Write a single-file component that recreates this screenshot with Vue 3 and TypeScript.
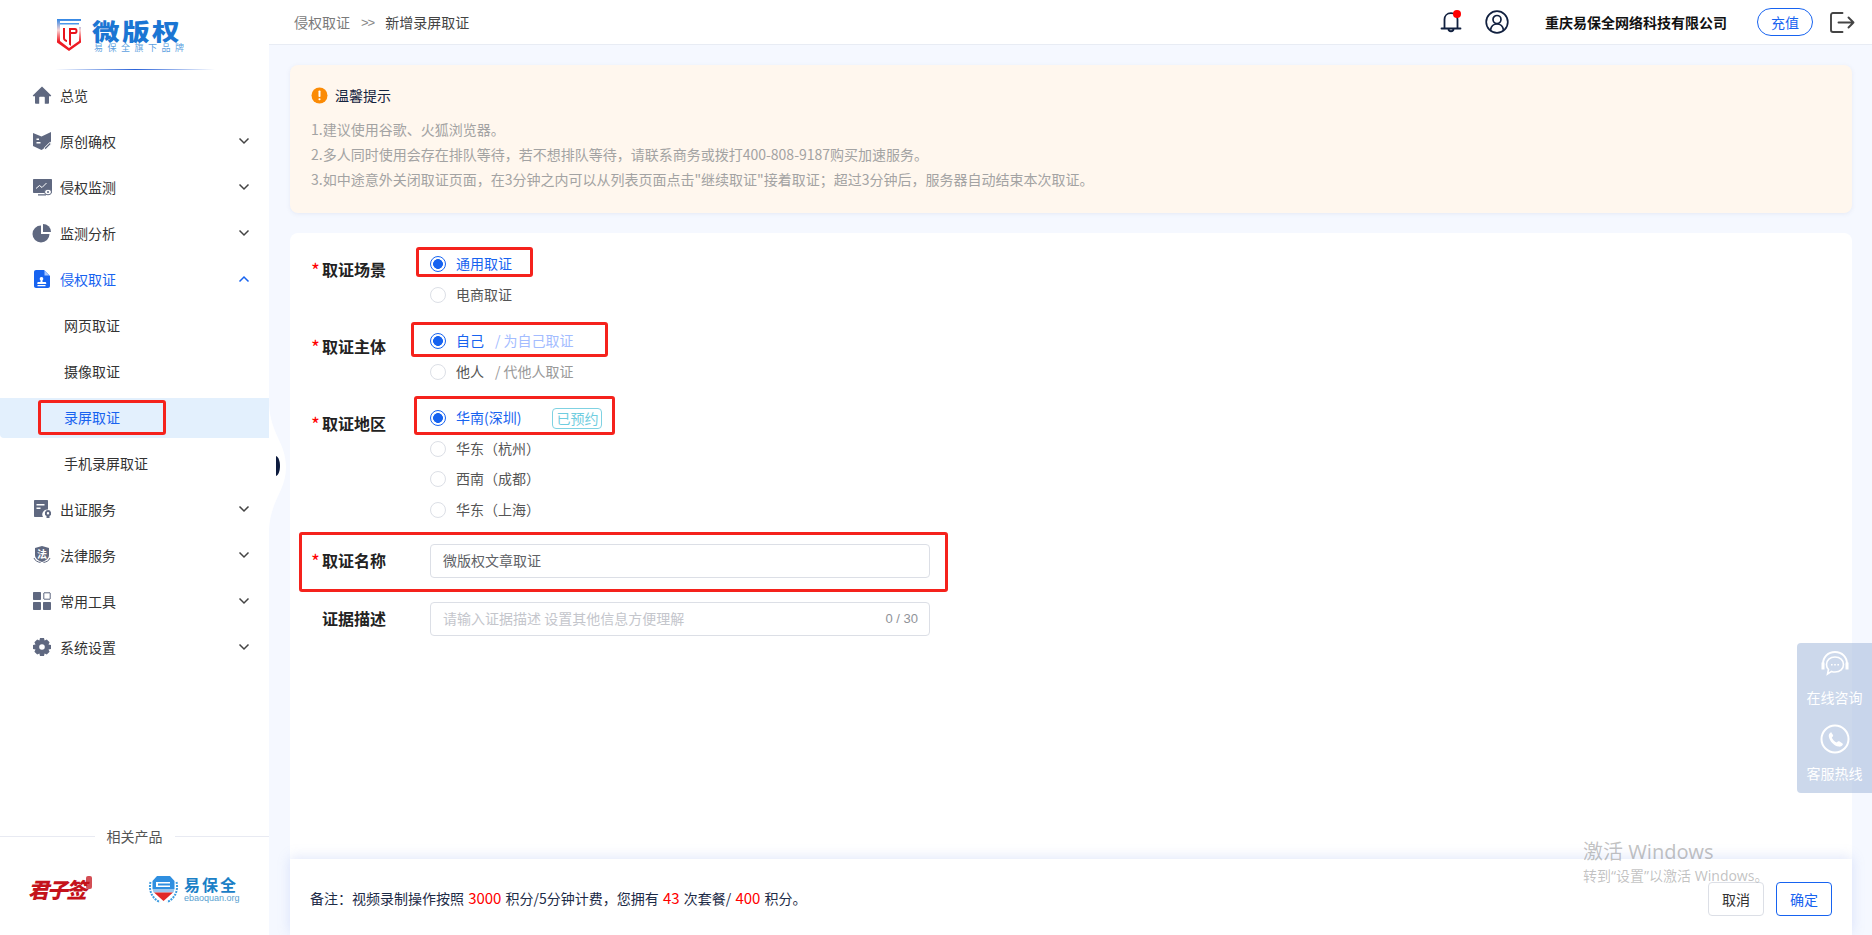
<script setup lang="ts">
interface Shape { d: string; f?: string; s?: string }
interface Item { label: string; paths: Shape[]; open?: boolean; chevron?: boolean; active?: boolean; glyph?: string }

const gray = '#5f6880'
const menuTop: Item[] = [
  { label: '总览', chevron: false, paths: [{ d: 'M9 .6 0 9.2c-.4.5 0 1.1.5 1.1H2v6.4c0 .6.5 1 1 1h3.2v-6c0-.6.4-1 1-1h3.6c.6 0 1 .4 1 1v6H15c.6 0 1-.4 1-1v-6.400h1.500c.5 0 .9-.6.5-1.100z', f: gray }] },
  { label: '原创确权', chevron: true, paths: [
    { d: 'M0 1 8.500 4.500 18 0V9.500L11 16.500 8.500 18 0 14z', f: gray },
    { d: 'M3.500 6.500h2.500V8H3.500zM3.500 10h4v1.400h-4z', f: '#fff' },
    { d: 'M11.500 15.800 16.800 10.500 18.300 12 13 17.300 11.200 17.600z', f: gray, s: '#fff' }] },
  { label: '侵权监测', chevron: true, paths: [
    { d: 'M1 1h17c.6 0 1 .4 1 1v12c0 .6-.4 1-1 1H1c-.6 0-1-.4-1-1V2c0-.6.4-1 1-1zM5 16.300h8v1.200H5z', f: gray },
    { d: 'M3 10.500 6.500 7.500 9 9.500 13.500 5', f: 'none', s: '#fff' },
    { d: 'M18.500 14a3.500 2.800 0 1 1-7 0 3.500 2.800 0 0 1 7 0z', f: '#fff', s: gray },
    { d: 'M15 13a1 1 0 1 0 0 2 1 1 0 0 0 0-2z', f: gray }] },
  { label: '监测分析', chevron: true, paths: [
    { d: 'M8 1.500V10h8.500A8.500 8.500 0 1 1 8 1.500z', f: gray },
    { d: 'M10 0a8 8 0 0 1 8 8h-8z', f: gray }] },
]
const evidence: Item = { label: '侵权取证', chevron: true, open: true, active: true, paths: [
  { d: 'M3 0h8l6 6v10c0 1.100-.9 2-2 2H3c-1.100 0-2-.9-2-2V2C1 .9 1.900 0 3 0z', f: '#1763f0' },
  { d: 'M11.500 .8 16.200 5.500H11.500z', f: '#a9c8ff' },
  { d: 'M8.500 7a1.800 1.800 0 0 1 1 3.300V12h2.800c.5 0 .9.400.9.900V14H4.300v-1.100c0-.5.400-.9.900-.9H7.500v-1.700A1.800 1.800 0 0 1 8.500 7zM4.500 15h8v1.200h-8z', f: '#fff' }] }
const subMenu = [
  { label: '网页取证' },
  { label: '摄像取证' },
  { label: '录屏取证', active: true },
  { label: '手机录屏取证' },
]
const menuBottom: Item[] = [
  { label: '出证服务', chevron: true, paths: [
    { d: 'M2 0h12c.6 0 1 .4 1 1v8.500a5 5 0 0 0-5 7.500H2c-.6 0-1-.4-1-1V1c0-.6.4-1 1-1z', f: gray },
    { d: 'M3.500 4h8v1.500h-8zM3.500 7.500h4V9h-4z', f: '#fff' },
    { d: 'M15 10a3.200 3.200 0 0 1 1.500 6v2h-3v-2A3.200 3.200 0 0 1 15 10z', f: gray },
    { d: 'M15 12a1.200 1.200 0 1 0 0 2.400 1.200 1.200 0 0 0 0-2.400z', f: '#fff' }] },
  { label: '法律服务', chevron: true, glyph: '法', paths: [
    { d: 'M9 0 16 2v7c0 3.500-3 5.500-7 7-4-1.500-7-3.500-7-7V2z', f: gray },
    { d: 'M1 12c1 3 4 4 6.500 4.500M17 12c-1 3-4 4-6.500 4.500', f: 'none', s: gray }] },
  { label: '常用工具', chevron: true, paths: [
    { d: 'M1 0h6c.6 0 1 .4 1 1v6c0 .6-.4 1-1 1H1c-.6 0-1-.4-1-1V1c0-.6.400-1 1-1zM1 10h6c.6 0 1 .4 1 1v6c0 .6-.4 1-1 1H1c-.6 0-1-.4-1-1v-6c0-.6.400-1 1-1zM11 10h6c.6 0 1 .4 1 1v6c0 .6-.4 1-1 1h-6c-.6 0-1-.4-1-1v-6c0-.6.400-1 1-1z', f: gray },
    { d: 'M11 .8h6c.1 0 .2.100.2.200v6c0 .1-.1.200-.2.200h-6c-.1 0-.2-.1-.2-.2V1c0-.1.100-.2.200-.2z', f: '#fff', s: gray }] },
  { label: '系统设置', chevron: true, paths: [
    { d: 'M7 0h4l.6 2.500 2.200-1.100 2.800 2.800-1.100 2.200L18 7v4l-2.500.6 1.100 2.200-2.800 2.800-2.200-1.100L11 18H7l-.6-2.500-2.200 1.100-2.800-2.800 1.100-2.200L0 11V7l2.500-.6-1.100-2.200 2.800-2.800 2.200 1.100z', f: gray },
    { d: 'M9 6.200a2.800 2.800 0 1 0 0 5.600 2.800 2.800 0 0 0 0-5.600z', f: '#fff' }] },
]

const tips = [
  '1.建议使用谷歌、火狐浏览器。',
  '2.多人同时使用会存在排队等待，若不想排队等待，请联系商务或拨打400-808-9187购买加速服务。',
  '3.如中途意外关闭取证页面，在3分钟之内可以从列表页面点击"继续取证"接着取证；超过3分钟后，服务器自动结束本次取证。',
]
const regions = ['华东（杭州）', '西南（成都）', '华东（上海）']
</script>

<template>
  <div class="page">
    <aside class="side">
      <div class="logo">
        <svg class="shield" width="26" height="34" viewBox="0 0 26 34">
          <defs>
            <linearGradient id="sg" x1="0" y1="0" x2="0" y2="1">
              <stop offset="0" stop-color="#2f86e6" /><stop offset=".35" stop-color="#fbd4d4" /><stop offset=".7" stop-color="#ee1c25" />
            </linearGradient>
          </defs>
          <path d="M1 1h24v2H4v20l9 7 10-7V9h2v15.500L13 33 1 24.500z" fill="url(#sg)" />
          <path d="M4 5h19v1.500H4z" fill="#4a97ea" />
          <path d="M7 10h2v10c0 1 .8 1.600 2 2v2c-2.500-.6-4-2-4-4zM13 10h6c1.700 0 2.500 1.200 2.500 3s-.8 3-2.500 3h-4v12l-2-1.400zM15 12v2h4c.3 0 .5-.4.500-1s-.2-1-.5-1z" fill="#e8131c" />
        </svg>
        <div class="logo-words">
          <div class="logo-name">微版权</div>
          <div class="logo-sub">易保全旗下品牌</div>
        </div>
      </div>
      <div class="logo-line"></div>

      <nav class="menu">
        <a v-for="m in menuTop" :key="m.label" class="item">
          <svg class="ico" width="20" height="20" viewBox="-1 -1 20 20"><path v-for="(p, i) in m.paths" :key="i" :d="p.d" :fill="p.f" :stroke="p.s" /></svg>
          <span class="label">{{ m.label }}</span>
          <svg v-if="m.chevron" class="chev" width="12" height="8" viewBox="0 0 12 8"><path d="M1.500 1.500 6 6l4.500-4.500" fill="none" stroke="#444" stroke-width="1.500" /></svg>
        </a>
        <a class="item on">
          <svg class="ico" width="20" height="20" viewBox="-1 -1 20 20"><path v-for="(p, i) in evidence.paths" :key="i" :d="p.d" :fill="p.f" /></svg>
          <span class="label">{{ evidence.label }}</span>
          <svg class="chev" width="12" height="8" viewBox="0 0 12 8"><path d="M1.500 6.500 6 2l4.500 4.500" fill="none" stroke="#1763f0" stroke-width="1.500" /></svg>
        </a>
        <a v-for="s in subMenu" :key="s.label" class="item sub" :class="{ cur: s.active }">
          <span class="sublabel">{{ s.label }}<i v-if="s.active" class="mark mark-side"></i></span>
        </a>
        <a v-for="m in menuBottom" :key="m.label" class="item">
          <svg class="ico" width="20" height="20" viewBox="-1 -1 20 20">
            <path v-for="(p, i) in m.paths" :key="i" :d="p.d" :fill="p.f" :stroke="p.s" />
            <text v-if="m.glyph" x="9" y="11.500" class="ico-glyph" text-anchor="middle">{{ m.glyph }}</text>
          </svg>
          <span class="label">{{ m.label }}</span>
          <svg class="chev" width="12" height="8" viewBox="0 0 12 8"><path d="M1.500 1.500 6 6l4.500-4.500" fill="none" stroke="#444" stroke-width="1.500" /></svg>
        </a>
      </nav>

      <div class="related">
        <div class="rel-title"><span>相关产品</span></div>
        <div class="rel-logos">
          <div class="junzi">君子签<i class="seal"></i></div>
          <div class="ebq">
            <svg width="31" height="31" viewBox="0 0 31 31">
              <path d="M2.500 9C.5 17 4 26 12 29M28.500 9c2 8-1.500 17-9.500 20" fill="none" stroke="#3c9be0" stroke-width="2" stroke-dasharray="2 1" />
              <path d="M9 3h13l4.500 5v8H4.500V8z" fill="#2f8fe0" />
              <path d="M4.500 16h22l-1 3.500H5.500z" fill="#9bc7ee" />
              <path d="M6 19.500h19L15.500 28z" fill="#e22a27" />
              <path d="M8 9h14v1.500H10v2h12V14H8z" fill="#fff" />
            </svg>
            <div class="ebq-words">
              <div class="ebq-name">易保全</div>
              <div class="ebq-url">ebaoquan.org</div>
            </div>
          </div>
        </div>
      </div>
    </aside>

    <svg class="notch" width="18" height="124" viewBox="0 0 18 124">
      <path d="M0 0c2 30 17 38 17 62S2 94 0 124z" fill="#fff" />
      <path d="M7 51c2.500 1 4 5 4 10s-1.500 9-4 10z" fill="#0d1b3e" />
    </svg>

    <div class="main">
      <header class="top">
        <div class="crumbs">
          <span class="crumb-a">侵权取证</span>
          <span class="crumb-sep">&gt;&gt;</span>
          <span class="crumb-b">新增录屏取证</span>
        </div>
        <div class="top-right">
          <span class="bell">
            <svg width="22" height="24" viewBox="0 0 22 24">
              <path d="M4.500 18V9.500C4.500 6 7 3.200 11 3.200s6.500 2.800 6.500 6.300V18M1.500 18.500h19M8.500 19c0 3 5 3 5 0" fill="none" stroke="#11203f" stroke-width="1.800" stroke-linecap="round" />
            </svg>
            <i class="dot"></i>
          </span>
          <svg class="user" width="24" height="24" viewBox="0 0 24 24">
            <circle cx="12" cy="12" r="10.800" fill="none" stroke="#11203f" stroke-width="1.700" />
            <circle cx="12" cy="9.500" r="4" fill="none" stroke="#11203f" stroke-width="1.700" />
            <path d="M5.500 20c.6-3.800 3-6 6.500-6s5.900 2.200 6.500 6" fill="none" stroke="#11203f" stroke-width="1.700" />
          </svg>
          <span class="company">重庆易保全网络科技有限公司</span>
          <button class="charge">充值</button>
          <svg class="logout" width="25" height="21" viewBox="0 0 25 21">
            <path d="M12.500 1H3C1.800 1 1 1.800 1 3v15c0 1.200.8 2 2 2h9.500" fill="none" stroke="#444" stroke-width="1.900" stroke-linecap="round" />
            <path d="M8.500 10.500h15M18.500 5.500l5 5-5 5" fill="none" stroke="#444" stroke-width="1.900" stroke-linecap="round" stroke-linejoin="round" />
          </svg>
        </div>
      </header>

      <div class="content">
        <section class="notice">
          <div class="notice-title">
            <svg width="17" height="17" viewBox="0 0 17 17"><circle cx="8.500" cy="8.500" r="8" fill="#fb8b05" /><rect x="7.500" y="3.500" width="2" height="6.500" rx=".8" fill="#fff" /><rect x="7.500" y="11.300" width="2" height="2" rx=".8" fill="#fff" /></svg>
            <span>温馨提示</span>
          </div>
          <p v-for="t in tips" :key="t">{{ t }}</p>
        </section>

        <section class="card">
          <form class="form" @submit.prevent>
            <div class="group">
              <label class="name req">取证场景</label>
              <div class="opts">
                <div class="opt sel"><i class="radio"></i><span>通用取证</span><i class="mark m1"></i></div>
                <div class="opt"><i class="radio"></i><span>电商取证</span></div>
              </div>
            </div>
            <div class="group">
              <label class="name req">取证主体</label>
              <div class="opts">
                <div class="opt sel"><i class="radio"></i><span>自己</span><em class="hint">/ 为自己取证</em><i class="mark m2"></i></div>
                <div class="opt"><i class="radio"></i><span>他人</span><em class="hint">/ 代他人取证</em></div>
              </div>
            </div>
            <div class="group">
              <label class="name req">取证地区</label>
              <div class="opts">
                <div class="opt sel"><i class="radio"></i><span>华南(深圳)</span><b class="tag">已预约</b><i class="mark m3"></i></div>
                <div v-for="r in regions" :key="r" class="opt"><i class="radio"></i><span>{{ r }}</span></div>
              </div>
            </div>
            <div class="field f-name">
              <label class="name req">取证名称</label>
              <div class="input">微版权文章取证</div>
              <i class="mark m4"></i>
            </div>
            <div class="field f-desc">
              <label class="name">证据描述</label>
              <div class="input ph">请输入证据描述 设置其他信息方便理解<span class="count">0 / 30</span></div>
            </div>
          </form>
          <footer class="foot">
            <p class="note">备注：视频录制操作按照 <b>3000</b> 积分/5分钟计费，您拥有 <b>43</b> 次套餐/ <b>400</b> 积分。</p>
            <div class="btns">
              <button class="btn">取消</button>
              <button class="btn ok">确定</button>
            </div>
          </footer>
        </section>
      </div>
    </div>

    <div class="float">
      <div class="float-item">
        <svg width="30" height="28" viewBox="0 0 30 28">
          <path d="M3 14C3 7 8 2 15 2s12 5 12 12" fill="none" stroke="#fff" stroke-width="2" />
          <path d="M1.500 12.500h3v7h-3zM25.500 12.500h3v7h-3z" fill="#fff" />
          <path d="M15 7c5 0 8.500 3 8.500 7.500S20 22 15 22c-1.200 0-2.400-.2-3.400-.6L7.500 24l1-4.500C7 18 6.500 16.300 6.500 14.500 6.500 10 10 7 15 7z" fill="none" stroke="#fff" stroke-width="1.600" />
          <path d="M11 14h1.600v1.600H11zM14.200 14h1.600v1.600h-1.600zM17.400 14H19v1.600h-1.600z" fill="#fff" />
        </svg>
        <span>在线咨询</span>
      </div>
      <div class="float-item">
        <svg width="30" height="30" viewBox="0 0 30 30">
          <circle cx="15" cy="15" r="13.500" fill="none" stroke="#fff" stroke-width="2" />
          <path d="M10.500 7.500 13 11c.3.500.2 1-.2 1.400l-1 1c.7 2 2.700 4.200 5 5.100l1-1c.4-.4 1-.5 1.500-.2l3.200 2.300c.5.400.5 1 .1 1.500-1 1.100-2.300 1.800-3.800 1.500-5-1-9-5.200-10-10.200-.2-1.500.4-2.800 1.500-3.700.4-.4 1.300-.2 1.700.3z" fill="#fff" />
        </svg>
        <span>客服热线</span>
      </div>
    </div>

    <div class="watermark">
      <div class="wm1">激活 Windows</div>
      <div class="wm2">转到“设置”以激活 Windows。</div>
    </div>
  </div>
</template>

<style scoped>
* { box-sizing: border-box; }
.page {
  position: relative;
  display: flex;
  width: 1872px;
  height: 935px;
  overflow: hidden;
  background: #f5f8ff;
  font-family: "Noto Sans CJK SC", "Noto Sans", sans-serif;
  font-size: 14px;
  color: #333;
}
.side {
  flex: 0 0 269px;
  display: flex;
  flex-direction: column;
  background: #fff;
}
.logo { display: flex; align-items: flex-start; height: 69px; padding: 18px 0 0 56px; gap: 10px; }
.logo-words { display: flex; flex-direction: column; }
.logo-name {
  font-size: 23px;
  line-height: 24px;
  font-weight: 900;
  letter-spacing: 2px;
  color: #1b76d3;
  transform: scaleX(1.2);
  transform-origin: left center;
}
.logo-sub { font-size: 9px; line-height: 10px; margin-top: 1px; padding-left: 2px; letter-spacing: 4.500px; color: #5d9fe0; white-space: nowrap; }
.logo-line {
  width: 160px;
  height: 1px;
  margin-left: 55px;
  background: linear-gradient(90deg, transparent, #2a62d8 50%, transparent);
}
.menu { display: flex; flex-direction: column; padding-top: 2px; }
.item {
  position: relative;
  display: flex;
  align-items: center;
  height: 46px;
  padding-left: 32px;
  color: #333;
}
.ico { flex: none; }
.ico-glyph { font-size: 10px; font-weight: 700; fill: #fff; }
.label { margin-left: 8px; }
.chev { position: absolute; left: 238px; top: 19px; }
.item.on .label { color: #1763f0; }
.sub { padding-left: 64px; }
.sublabel { position: relative; }
.sub.cur { height: 46px; color: #1763f0; }
.sub.cur::before {
  content: "";
  position: absolute;
  left: 0;
  right: 0;
  top: 4px;
  height: 40px;
  background: #e3f0fd;
  border-radius: 0 0 0 4px;
}
.mark {
  position: absolute;
  border: 3px solid #f5221c;
  border-radius: 3px;
  pointer-events: none;
  z-index: 2;
}
.mark-side { left: -26px; top: -7px; width: 128px; height: 35px; }
.related { margin-top: auto; height: 109px; }
.rel-title {
  display: flex;
  justify-content: center;
  height: 20px;
  margin-bottom: 27px;
  background: linear-gradient(#e8eaf2, #e8eaf2) center / 100% 1px no-repeat;
}
.rel-title span { padding: 0 12px; background: #fff; color: #555; line-height: 20px; }
.rel-logos { display: flex; align-items: center; padding-left: 28px; }
.junzi {
  position: relative;
  width: 120px;
  font-size: 21px;
  font-weight: 900;
  font-style: italic;
  color: #c4131b;
  letter-spacing: -2px;
  line-height: 30px;
}
.seal { position: absolute; left: 58px; top: 2px; width: 6px; height: 13px; border-radius: 2px; background: #c4131b; opacity: .75; }
.ebq { display: flex; align-items: center; gap: 5px; }
.ebq-name { font-size: 16px; line-height: 18px; font-weight: 700; letter-spacing: 2px; color: #1b80c6; }
.ebq-url { font-family: "Liberation Sans", sans-serif; font-size: 9px; line-height: 10px; color: #5a9fd0; }
.notch { position: absolute; left: 269px; top: 405px; z-index: 3; }
.main { flex: 1; min-width: 0; display: flex; flex-direction: column; }
.top {
  flex: 0 0 45px;
  display: flex;
  align-items: center;
  justify-content: space-between;
  padding: 0 17px 0 25px;
  background: #fff;
  border-bottom: 1px solid #e8ecf4;
}
.crumbs { display: flex; align-items: center; }
.crumb-a { color: #7a7a7a; }
.crumb-sep { margin: 0 11px; color: #888; font-family: "Liberation Sans", sans-serif; font-size: 13px; letter-spacing: -1px; }
.crumb-b { color: #444; }
.top-right { display: flex; align-items: center; }
.bell { position: relative; display: flex; margin-right: 23px; }
.dot { position: absolute; right: 1px; top: 0; width: 8px; height: 8px; border-radius: 50%; background: #f00; }
.user { margin-right: 36px; }
.company { font-size: 14px; font-weight: 700; color: #111; margin-right: 30px; }
.charge {
  width: 56px;
  height: 28px;
  padding: 0;
  margin-right: 17px;
  border: 1px solid #1763f0;
  border-radius: 14px;
  background: #fff;
  color: #1763f0;
  font: inherit;
}
.content { flex: 1; min-height: 0; display: flex; flex-direction: column; padding: 20px 20px 0 21px; gap: 20px; }
.notice {
  flex: 0 0 148px;
  padding: 20px 21px 0;
  background: #fff7ee;
  border-radius: 8px;
  box-shadow: 0 1px 4px rgba(120, 130, 170, .12);
}
.notice-title { display: flex; align-items: center; gap: 7px; height: 20px; margin: 0 0 12px; color: #14233f; }
.notice p { margin: 0; line-height: 25px; color: #a3a3a3; font-size: 14px; }
.card {
  flex: 1;
  min-height: 0;
  display: flex;
  flex-direction: column;
  background: #fff;
  border-radius: 8px 8px 0 0;
}
.form { flex: 1; padding: 16px 0 0 20px; }
.group { display: flex; margin-bottom: 16px; }
.group:nth-child(3) { margin-bottom: 19px; }
.name {
  position: relative;
  flex: 0 0 120px;
  padding: 10px 0 0 12px;
  font-size: 16px;
  line-height: 20px;
  font-weight: 700;
  color: #222;
}
.req::before { content: "*"; position: absolute; left: 1px; top: 11px; color: #f00; font-weight: 400; font-size: 19px; }
.opts { display: flex; flex-direction: column; }
.opt { position: relative; display: flex; align-items: center; height: 30.500px; color: #555; }
.opt span, .hint { margin-bottom: 2px; }
.radio {
  flex: none;
  width: 16px;
  height: 16px;
  margin-right: 10px;
  border: 1px solid #dcdfe6;
  border-radius: 50%;
  background: #fff;
}
.opt.sel { color: #1763f0; }
.opt.sel .radio { border-color: #1763f0; background: radial-gradient(circle, #1763f0 4.600px, #fff 5.200px); }
.hint { margin-left: 11px; font-style: normal; color: #999; }
.sel .hint { color: #a3bcff; }
.tag {
  margin-left: 31px;
  width: 50px;
  height: 21px;
  border: 1px solid #7fd2e2;
  border-radius: 4px;
  color: #6fcde0;
  font-weight: 400;
  line-height: 18px;
  text-align: center;
}
.m1 { left: -14px; top: -2px; width: 117px; height: 30px; }
.m2 { left: -19px; top: -4px; width: 197px; height: 35px; }
.m3 { left: -16px; top: -7px; width: 201px; height: 39px; }
.field { position: relative; display: flex; align-items: center; height: 34px; }
.f-name { margin-bottom: 24px; }
.field .name { padding-top: 0; padding-bottom: 2px; }
.field .req::before { top: 1px; }
.m4 { left: -11px; top: -12px; width: 649px; height: 60px; }
.input {
  position: relative;
  width: 500px;
  height: 34px;
  padding-left: 12px;
  border: 1px solid #dcdfe6;
  border-radius: 4px;
  background: #fff;
  line-height: 31px;
  color: #606266;
}
.ph { color: #c4c6cc; }
.count { position: absolute; right: 11px; top: 0; font-family: "Liberation Sans", sans-serif; font-size: 13px; color: #909399; }
.foot {
  flex: 0 0 76px;
  display: flex;
  align-items: center;
  justify-content: space-between;
  padding: 0 20px;
  background: #fff;
  box-shadow: 0 -2px 12px rgba(120, 145, 230, .22);
}
.note { margin: 0; color: #1d2b47; }
.note b { font-weight: 400; font-size: 15px; margin: 0 1px; color: #f00; }
.btns { display: flex; gap: 12px; margin-top: 3px; }
.btn {
  width: 56px;
  height: 34px;
  padding: 0;
  border: 1px solid #dcdfe6;
  border-radius: 4px;
  background: #fff;
  color: #333;
  font: inherit;
}
.btn.ok { border-color: #1763f0; color: #1763f0; }
.float {
  position: absolute;
  right: 0;
  top: 643px;
  width: 75px;
  height: 150px;
  padding-top: 7px;
  display: flex;
  flex-direction: column;
  gap: 17px;
  border-radius: 4px 0 0 4px;
  background: rgba(170, 190, 222, .6);
  z-index: 4;
}
.float-item { display: flex; flex-direction: column; align-items: center; gap: 9px; color: #fff; font-size: 14px; line-height: 20px; }
.watermark { position: absolute; left: 1583px; top: 838px; font-family: "Noto Sans", "Noto Sans CJK SC", sans-serif; color: rgba(80, 80, 80, .35); z-index: 4; pointer-events: none; }
.wm1 { font-size: 20px; line-height: 28px; }
.wm2 { font-size: 14px; line-height: 20px; }
</style>

<style>
html, body { margin: 0; padding: 0; }
</style>
